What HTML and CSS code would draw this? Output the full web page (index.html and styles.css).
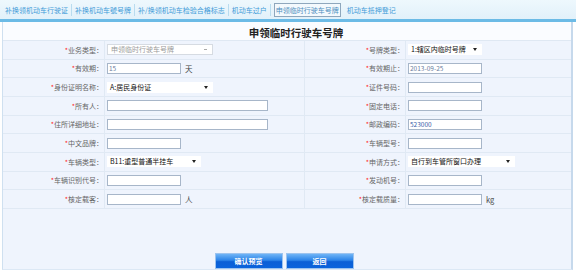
FILE: index.html
```html
<!DOCTYPE html>
<html lang="zh-CN">
<head>
    <meta charset="UTF-8">
    <title>申领临时行驶车号牌</title>
    <link rel="stylesheet" href="styles.css">
</head>
<body>
    <div class="tabs">
        <a class="tab">补换领机动车行驶证</a>
        <a class="tab">补换机动车號号牌</a>
        <a class="tab">补/换领机动车检验合格标志</a>
        <a class="tab">机动车过户</a>
        <a class="tab active">申领临时行驶车号牌</a>
        <a class="tab">机动车抵押登记</a>
    </div>

    <div class="panel">
        <h2 class="panel-title">申领临时行驶车号牌</h2>
        <form class="form-grid">
            <div class="label"><i>*</i>业务类型：</div>
            <div class="value"><span class="select disabled w-lg">申领临时行驶车号牌</span></div>
            <div class="label"><i>*</i>号牌类型：</div>
            <div class="value"><span class="select w-sm">1:辖区内临时号牌</span></div>

            <div class="label"><i>*</i>有效期：</div>
            <div class="value"><input class="field w-sm" value="15"><span class="unit">天</span></div>
            <div class="label"><i>*</i>有效期止：</div>
            <div class="value"><input class="field w-sm" value="2013-09-25"></div>

            <div class="label"><i>*</i>身份证明名称：</div>
            <div class="value"><span class="select w-lg">A:居民身份证</span></div>
            <div class="label"><i>*</i>证件号码：</div>
            <div class="value"><input class="field w-sm"></div>

            <div class="label"><i>*</i>所有人：</div>
            <div class="value"><input class="field w-xl"></div>
            <div class="label"><i>*</i>固定电话：</div>
            <div class="value"><input class="field w-sm"></div>

            <div class="label"><i>*</i>住所详细地址：</div>
            <div class="value"><input class="field w-xl"></div>
            <div class="label"><i>*</i>邮政编码：</div>
            <div class="value"><input class="field w-sm blue" value="523000"></div>

            <div class="label"><i>*</i>中文品牌：</div>
            <div class="value"><input class="field w-sm"></div>
            <div class="label"><i>*</i>车辆型号：</div>
            <div class="value"><input class="field w-sm"></div>

            <div class="label"><i>*</i>车辆类型：</div>
            <div class="value"><span class="select w-md">B11:重型普通半挂车</span></div>
            <div class="label"><i>*</i>申请方式：</div>
            <div class="value"><span class="select w-wide">自行到车管所窗口办理</span></div>

            <div class="label"><i>*</i>车辆识别代号：</div>
            <div class="value"><input class="field w-sm"></div>
            <div class="label"><i>*</i>发动机号：</div>
            <div class="value"><input class="field w-sm"></div>

            <div class="label"><i>*</i>核定载客：</div>
            <div class="value"><input class="field w-sm"><span class="unit">人</span></div>
            <div class="label"><i>*</i>核定载质量：</div>
            <div class="value"><input class="field w-sm"><span class="unit">kg</span></div>
        </form>
        <div class="actions">
            <button type="button" class="btn">确认预览</button>
            <button type="button" class="btn">返回</button>
        </div>
    </div>
</body>
</html>
```

FILE: styles.css
```css
body {
    margin: 0;
    font-family: "Noto Sans CJK SC", "Liberation Sans", sans-serif;
    font-size: 7px;
    color: #555;
    background-color: #ffffff;
}

.tabs {
    display: flex;
    align-items: center;
    height: 19px;
    padding-left: 2px;
    background: linear-gradient(#eef8fd, #e2f1fa);
    border-bottom: 3px solid #6cbbe6;
}

.tab {
    padding: 0 3px;
    line-height: 12px;
    color: #3f9bd8;
    border-right: 1px solid #b9dcef;
    white-space: nowrap;
    cursor: pointer;
}

.tab:last-child {
    border-right: none;
}

.tab.active {
    margin: 0 3px;
    padding: 0 1px;
    border: 1px solid #8ea7bd;
    background-color: #f3f9fd;
    color: #4f8fc0;
}

.panel {
    margin: 0 3px 0 2px;
    height: 248px;
    border-left: 1px solid #cfe0f0;
    border-right: 2px solid #c6d9ec;
    border-bottom: 1px solid #dce8f5;
    background-color: #eff4fd;
    box-sizing: border-box;
}

.panel-title {
    margin: 0;
    height: 19px;
    line-height: 22px;
    padding-left: 18px;
    text-align: center;
    font-size: 10.5px;
    font-weight: bold;
    color: #222;
    background-color: #fafcff;
    border-bottom: 1px solid #dfe8f3;
    box-sizing: border-box;
}

.form-grid {
    display: grid;
    grid-template-columns: 102px 200px 101px 1fr;
    grid-auto-rows: 18.67px;
    margin: 0;
}

.form-grid > div {
    display: flex;
    align-items: center;
    border-bottom: 1px solid #e0e9f4;
    border-right: 1px solid #e0e9f4;
    box-sizing: border-box;
}

.form-grid > div:nth-child(4n) {
    border-right: none;
}

.label {
    justify-content: flex-end;
    padding-right: 1px;
    color: #666;
    white-space: nowrap;
}

.label i {
    font-style: normal;
    color: #f22;
}

.value {
    padding-left: 2px;
}

.field {
    height: 11px;
    padding: 0 1px;
    margin: 0;
    border: 1px solid #a7b6c9;
    background-color: #ffffff;
    font-family: inherit;
    font-size: 6.5px;
    line-height: 6px;
    color: #6a7ea0;
    box-sizing: border-box;
    vertical-align: top;
}

.field.blue {
    color: #3a5ca8;
}

.w-sm { width: 74px; }
.w-md { width: 94px; }
.w-lg { width: 106px; }
.w-xl { width: 161px; }
.w-wide { width: 107px; }

.select {
    position: relative;
    display: inline-block;
    height: 11px;
    line-height: 11px;
    padding-left: 3px;
    background-color: #ffffff;
    color: #111;
    font-size: 7px;
    box-sizing: border-box;
    white-space: nowrap;
}

.select::after {
    content: "";
    position: absolute;
    right: 5px;
    top: 4px;
    border-left: 2px solid transparent;
    border-right: 2px solid transparent;
    border-top: 3px solid #222;
}

.select.disabled {
    border: 1px solid #d6dbe2;
    color: #9a9a9a;
    font-size: 7px;
    line-height: 9px;
}

.select.disabled::after {
    top: 4px;
    width: 3px;
    height: 1px;
    border: none;
    background-color: #aaa;
}

.unit {
    margin-left: 4px;
    color: #444;
    font-size: 7.5px;
}

.actions {
    display: flex;
    justify-content: center;
    gap: 3px;
    padding-top: 44px;
    padding-right: 6px;
}

.btn {
    width: 68px;
    height: 16px;
    padding: 0;
    border: 1px solid #9cc3ef;
    background: linear-gradient(#6fb4f6 0%, #2b83e8 45%, #0b5fd6 55%, #0a63dc 100%);
    color: #ffffff;
    font-family: inherit;
    font-size: 7px;
    font-weight: bold;
    cursor: pointer;
}

.btn:hover {
    background: #0b5fd6;
}
```
